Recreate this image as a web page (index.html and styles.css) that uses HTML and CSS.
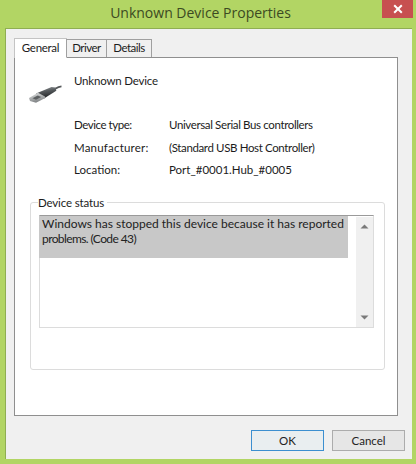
FILE: index.html
```html
<!DOCTYPE html>
<html lang="en">
<head>
<meta charset="utf-8">
<title>Unknown Device Properties</title>
<link rel="stylesheet" href="styles.css">
</head>
<body>
<div class="titlebar">
  <div class="title">Unknown Device Properties</div>
  <div class="close"><svg width="10" height="10" viewBox="0 0 10 10"><path d="M1.2 1.2L8.8 8.8M8.8 1.2L1.2 8.8" stroke="#fff" stroke-width="2"/></svg></div>
</div>
<div class="client">
  <div class="tabs">
    <div class="tab active">General</div>
    <div class="tab second">Driver</div>
    <div class="tab third">Details</div>
  </div>
  <div class="panel">
    <div class="head">
      <svg class="usb" width="36" height="22" viewBox="0 0 36 22">
        <defs>
          <linearGradient id="body" x1="0" y1="0" x2="0.25" y2="1">
            <stop offset="0" stop-color="#9a9ea1"/>
            <stop offset="0.45" stop-color="#55595c"/>
            <stop offset="1" stop-color="#232527"/>
          </linearGradient>
          <linearGradient id="tip" x1="0" y1="0" x2="0.3" y2="1">
            <stop offset="0" stop-color="#e4e6e6"/>
            <stop offset="1" stop-color="#7f8284"/>
          </linearGradient>
        </defs>
        <path d="M26 6.5C28.5 5 30.5 3.6 33.5 3.4" fill="none" stroke="#55585a" stroke-width="1.8"/>
        <path d="M8 10.5L23.5 4L27.5 4.6L28.3 7.8L16 15.5Z" fill="url(#body)"/>
        <path d="M1 15L10 9.8L17 13.5L17.3 15L8 19.8L2 18Z" fill="url(#tip)"/>
        <path d="M4.5 15.2L9.8 12.4L13.2 14L8 16.8Z" fill="#5d6062"/>
      </svg>
      <div class="name">Unknown Device</div>
    </div>
    <dl class="props">
      <dt class="narrow">Device type:</dt><dd class="tight">Universal Serial Bus controllers</dd>
      <dt class="wide">Manufacturer:</dt><dd class="tight">(Standard USB Host Controller)</dd>
      <dt>Location:</dt><dd>Port_#0001.Hub_#0005</dd>
    </dl>
    <fieldset class="status">
      <legend>Device status</legend>
      <div class="box">
        <div class="message">Windows has stopped this device because it has reported <span class="line2">problems. (Code 43)</span></div>
        <div class="scroll">
          <svg width="9" height="5" viewBox="0 0 9 5"><path d="M4.5 0.5L8.5 4.5H0.5Z" fill="#7a7a7a"/></svg>
          <svg width="9" height="5" viewBox="0 0 9 5"><path d="M4.5 4.5L8.5 0.5H0.5Z" fill="#7a7a7a"/></svg>
        </div>
      </div>
    </fieldset>
  </div>
  <div class="buttons">
    <div class="btn default">OK</div>
    <div class="btn">Cancel</div>
  </div>
</div>
</body>
</html>
```
FILE: styles.css
```css
* { box-sizing: border-box; }
html, body { margin: 0; padding: 0; }
body {
  width: 416px;
  height: 464px;
  overflow: hidden;
  background: #b2d564;
  font-family: "Lato", "Open Sans", sans-serif;
  font-size: 11.5px;
  color: #1c1c1c;
  display: flex;
  flex-direction: column;
}
.titlebar {
  height: 28px;
  flex: none;
  display: flex;
  justify-content: center;
  padding-right: 15px;
  position: relative;
}
.title {
  font-family: "Open Sans", sans-serif;
  font-size: 14px;
  line-height: 25px;
  color: #3c4a22;
}
.close {
  position: absolute;
  left: 382px;
  top: 0;
  width: 31px;
  height: 18px;
  background: #c75050;
  display: flex;
  align-items: center;
  justify-content: center;
}
.client {
  margin-left: 5px;
  width: 407px;
  height: 431px;
  flex: none;
  background: #f0f0f0;
  border-left: 1px solid #8fae52;
  border-top: 1px solid #8fae52;
  padding: 9px 0 0 8px;
  display: flex;
  flex-direction: column;
}
.tabs {
  display: flex;
  align-items: flex-end;
  height: 19px;
  flex: none;
  position: relative;
  z-index: 1;
}
.tab {
  height: 18px;
  line-height: 16px;
  text-align: center;
  background: #f0f0f0;
  border: 1px solid #a0a0a0;
  border-bottom: 0;
  margin-left: -1px;
  letter-spacing: -0.5px;
}
.tab.active {
  width: 53px;
  height: 20px;
  margin-left: 0;
  margin-bottom: -1px;
  background: #fff;
  line-height: 18px;
  border-color: #c4c4c4;
  letter-spacing: -0.3px;
}
.second { width: 41px; }
.third { width: 46px; }
.panel {
  width: 384px;
  height: 359px;
  flex: none;
  background: #fff;
  border: 1px solid #8f8f8f;
  padding: 0 12px 0 15px;
}
.head {
  display: flex;
  height: 59px;
  flex: none;
}
.usb {
  margin: 25px 0 0 -2px;
  flex: none;
}
.name {
  margin: 15px 0 0 10px;
  line-height: 16px;
  letter-spacing: -0.2px;
}
.props {
  margin: 0 0 0 44px;
  display: grid;
  grid-template-columns: 95px 1fr;
  grid-auto-rows: 22.5px;
  line-height: 16px;
  height: 78px;
}
.props dt, .props dd { margin: 0; }
.props .tight { letter-spacing: -0.37px; }
.props .narrow { letter-spacing: -0.45px; }
.props .wide { letter-spacing: 0.2px; }
.status {
  margin: 0;
  padding: 5px 10px 0 8px;
  width: 355px;
  height: 175px;
  border: 1px solid #dcdcdc;
  border-radius: 3px;
}
.status legend {
  padding: 0 3px 0 0;
  margin-left: -1px;
  line-height: 15px;
  letter-spacing: -0.15px;
  background: #fff;
}
.box {
  width: 335px;
  height: 113px;
  border: 1px solid #dcdcdc;
  border-top-color: #9a9a9a;
  display: flex;
  justify-content: space-between;
}
.message {
  width: 309px;
  height: 42px;
  margin-left: -1px;
  background: #c8c8c8;
  padding: 0 3px;
  font-size: 12px;
  line-height: 15px;
  color: #222;
}
.line2 { letter-spacing: -0.6px; }
.scroll {
  width: 17px;
  height: 110px;
  margin-top: 1px;
  background: #f0f0f0;
  display: flex;
  flex-direction: column;
  justify-content: space-between;
  align-items: center;
  padding: 7px 0;
}
.buttons {
  display: flex;
  gap: 8px;
  margin: 14px 0 0 237px;
}
.btn {
  width: 73px;
  height: 21px;
  background: #e6e6e6;
  border: 1px solid #acacac;
  text-align: center;
  line-height: 19px;
  color: #222;
}
.btn.default {
  border-color: #3c8fd0;
  background: #e9eef0;
}
```
